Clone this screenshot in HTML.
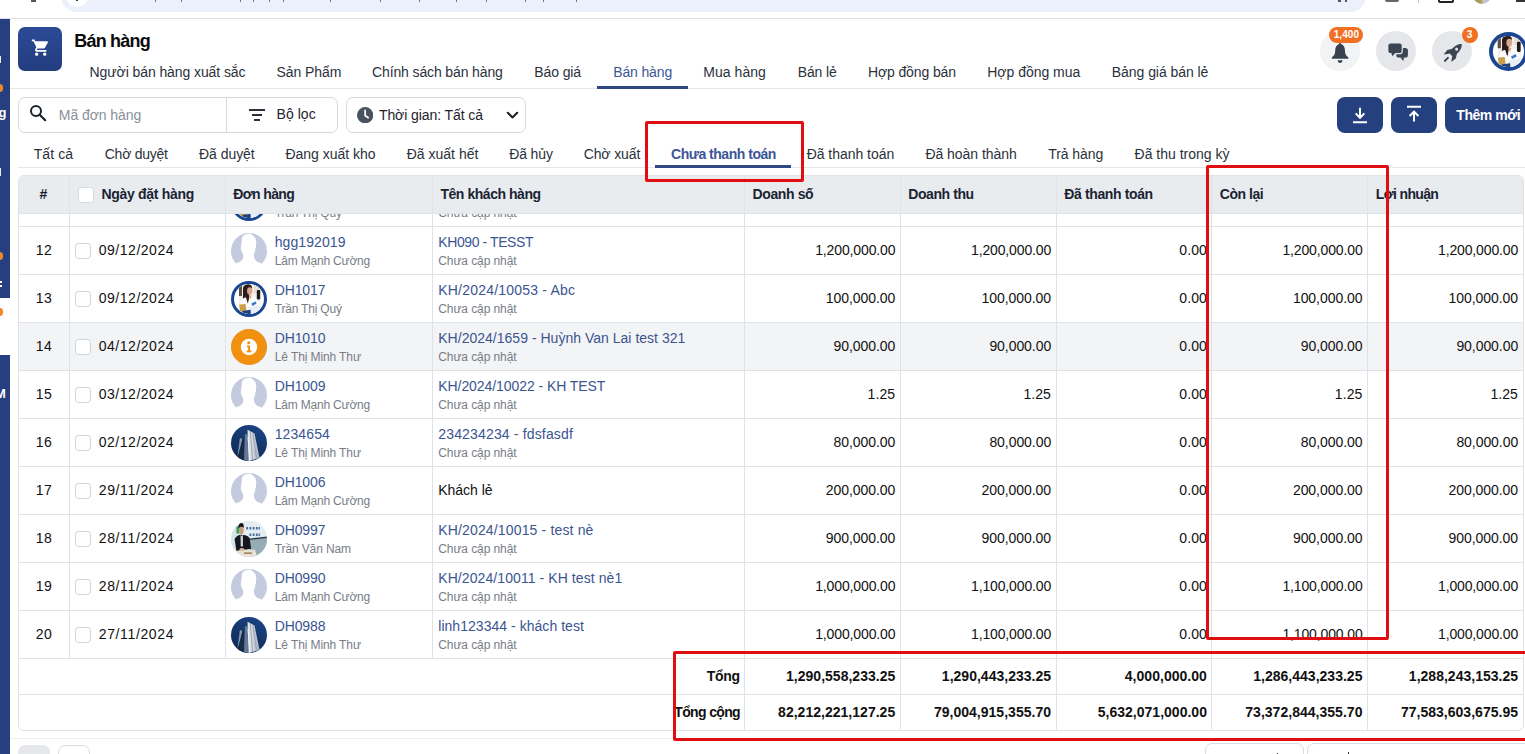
<!DOCTYPE html>
<html lang="vi"><head><meta charset="utf-8"><title>Bán hàng</title>
<style>
*{box-sizing:border-box;margin:0;padding:0}
html,body{width:1525px;height:754px;overflow:hidden;background:#fff}
body{position:relative;font-family:"Liberation Sans",sans-serif;font-size:14px;color:#111}
.a{position:absolute}
.t{position:absolute;white-space:nowrap;line-height:1}
.hl{position:absolute;height:1px;background:#dfe2e7}
.vl{position:absolute;width:1px;background:#dfe2e7}
.cb{position:absolute;width:16px;height:16px;border:1px solid #cfd3da;border-radius:3.5px;background:#fff}
.red{position:absolute;border:3px solid #e10d10;border-radius:2px}
.av{position:absolute;width:36px;height:36px}
.ic{position:absolute;width:40px;height:40px;border-radius:50%}
.btn{position:absolute;top:97px;height:36px;background:#25407f;border-radius:8px}
</style></head><body>

<svg width="0" height="0" style="position:absolute"><defs><mask id="mdef" maskUnits="userSpaceOnUse" x="0" y="0" width="36" height="36"><rect width="36" height="36" fill="#fff"/><path fill="#000" d="M16.500 .9C13 1.100 11.200 3 10.900 5.400L10.300 12.400L9.700 15.300L10.600 18.200L12.400 22.300C12.400 24 11.800 26.500 10.600 27.600C9 29 7 29.800 5.400 30.200L-1 32.800L-1 37L37 37L37 32.800L30.500 30.500C28.500 29.800 26.500 29.200 25.200 28.100C23.800 26.800 23 24.500 22.900 22.300L23.800 18.200L24.900 14.100L25.200 9.500C25.200 7.500 24.800 6 24.100 4.800C23.400 3.500 22.300 2.500 21 1.900L20.600 1.050C19.500 .85 18 .8 16.500 .9Z"/></mask></defs></svg>
<div class="a" style="left:61px;top:-20px;width:1305px;height:32px;background:#ecf0fa;border-radius:16px"></div>
<div class="a" style="left:66px;top:-15px;width:22px;height:22px;background:#fff;border-radius:50%"></div>
<div class="a" style="left:76px;top:0;width:2px;height:1px;background:#444"></div>
<div class="a" style="left:31px;top:0;width:5px;height:1.5px;background:#555"></div>
<div class="a" style="left:155px;top:0;width:1px;height:2px;background:#777"></div><div class="a" style="left:181px;top:0;width:1px;height:2px;background:#777"></div><div class="a" style="left:240px;top:0;width:1px;height:2px;background:#777"></div><div class="a" style="left:253px;top:0;width:1px;height:2px;background:#777"></div><div class="a" style="left:269px;top:0;width:1px;height:2px;background:#777"></div><div class="a" style="left:283px;top:0;width:1px;height:2px;background:#777"></div><div class="a" style="left:330px;top:0;width:1px;height:2px;background:#777"></div><div class="a" style="left:380px;top:0;width:1px;height:2px;background:#777"></div><div class="a" style="left:419px;top:0;width:1px;height:2px;background:#777"></div><div class="a" style="left:456px;top:0;width:1px;height:2px;background:#777"></div><div class="a" style="left:486px;top:0;width:1px;height:2px;background:#777"></div><div class="a" style="left:525px;top:0;width:1px;height:2px;background:#777"></div><div class="a" style="left:543px;top:0;width:1px;height:2px;background:#777"></div><div class="a" style="left:576px;top:0;width:1px;height:2px;background:#777"></div>
<div class="a" style="left:1338px;top:0;width:2.500px;height:1.500px;background:#555"></div><div class="a" style="left:1344.500px;top:0;width:2.500px;height:1.500px;background:#555"></div>
<div class="a" style="left:1385px;top:-8px;width:14px;height:10px;border:2px solid #666;border-radius:2px"></div>
<div class="a" style="left:1418px;top:0;width:1px;height:3px;background:#b9c7ef"></div>
<div class="a" style="left:1438px;top:-9px;width:16px;height:12px;border:2px solid #222;border-radius:2px"></div>
<div class="a" style="left:1473px;top:-14px;width:18px;height:18px;border-radius:50%;background:linear-gradient(90deg,#8d8f45 0,#a9a35b 45%,#c8ccd4 60%,#aeb6c6 100%)"></div>
<div class="a" style="left:1516px;top:0;width:9px;height:2px;background:#333"></div>
<div class="hl" style="left:0;top:18px;width:1525px;background:#dcdee2"></div>
<div class="a" style="left:0;top:19px;width:10px;height:279px;background:#253f80"></div>
<div class="a" style="left:0;top:355px;width:10px;height:399px;background:#253f80"></div>
<div class="a" style="left:0;top:19px;width:10px;height:735px;overflow:hidden">
<div class="a" style="left:-4.200px;top:65.2px;width:7.600px;height:7.600px;border-radius:50%;background:#f08a24"></div>
<div class="a" style="left:-4.200px;top:233.2px;width:7.600px;height:7.600px;border-radius:50%;background:#f08a24"></div>
<div class="a" style="left:-4.200px;top:289.2px;width:7.600px;height:7.600px;border-radius:50%;background:#f08a24"></div>
<div class="a" style="left:0;top:37px;width:1px;height:7px;background:#e8ebf3"></div>
<div class="a" style="left:0;top:149px;width:1px;height:8px;background:#e8ebf3"></div>
<div class="a" style="left:0;top:262px;width:2px;height:2px;background:#fff"></div>
<div class="a" style="left:0;top:266px;width:2px;height:2px;background:#fff"></div>
<span class="t" style="left:-1.5px;top:86.5px;font-size:13px;font-weight:700;color:#fff">g</span>
<span class="t" style="left:-5px;top:368.0px;font-size:13px;font-weight:700;color:#fff">M</span>
</div>
<div class="a" style="left:18px;top:27px;width:44px;height:44px;border-radius:7px;background:linear-gradient(180deg,#2b4b97,#233d7e)"></div>
<svg class="a" style="left:31px;top:38.2px" width="19.4" height="19.4" viewBox="0 0 24 24"><path fill="#fff" d="M7 18c-1.1 0-1.99.9-1.99 2S5.9 22 7 22s2-.9 2-2-.9-2-2-2zM1 2v2h2l3.6 7.59-1.35 2.45c-.16.28-.25.61-.25.96 0 1.1.9 2 2 2h12v-2H7.42c-.14 0-.25-.11-.25-.25l.03-.12.9-1.63h7.45c.75 0 1.41-.41 1.75-1.03l3.58-6.49c.08-.14.12-.31.12-.48 0-.55-.45-1-1-1H5.21l-.94-2H1zm16 16c-1.1 0-1.99.9-1.99 2s.89 2 1.99 2 2-.9 2-2-.9-2-2-2z"/></svg>
<span class="t" id="t1" style="top:31.76px;font-size:18px;font-weight:700;color:#0b0b0b;letter-spacing:-0.802px;left:74.25px;">Bán hàng</span>
<span class="t" id="t2" style="top:65.15px;font-size:14px;color:#2b313b;letter-spacing:-0.086px;left:89.55px;">Người bán hàng xuất sắc</span>
<span class="t" id="t3" style="top:65.15px;font-size:14px;color:#2b313b;letter-spacing:-0.072px;left:276.45px;">Sản Phẩm</span>
<span class="t" id="t4" style="top:65.15px;font-size:14px;color:#2b313b;letter-spacing:-0.127px;left:372.05px;">Chính sách bán hàng</span>
<span class="t" id="t5" style="top:65.15px;font-size:14px;color:#2b313b;letter-spacing:-0.112px;left:534.35px;">Báo giá</span>
<span class="t" id="t6" style="top:65.15px;font-size:14px;color:#3c5796;letter-spacing:-0.144px;left:613.25px;">Bán hàng</span>
<span class="t" id="t7" style="top:65.15px;font-size:14px;color:#2b313b;letter-spacing:0.027px;left:703.35px;">Mua hàng</span>
<span class="t" id="t8" style="top:65.15px;font-size:14px;color:#2b313b;letter-spacing:-0.134px;left:797.75px;">Bán lẻ</span>
<span class="t" id="t9" style="top:65.15px;font-size:14px;color:#2b313b;letter-spacing:-0.114px;left:867.95px;">Hợp đồng bán</span>
<span class="t" id="t10" style="top:65.15px;font-size:14px;color:#2b313b;letter-spacing:-0.020px;left:987.25px;">Hợp đồng mua</span>
<span class="t" id="t11" style="top:65.15px;font-size:14px;color:#2b313b;letter-spacing:-0.060px;left:1111.85px;">Bảng giá bán lẻ</span>
<div class="hl" style="left:10px;top:88px;width:1515px;background:#e4e6ea"></div>
<div class="a" style="left:597px;top:86px;width:91px;height:3px;background:#2e4785"></div>
<div class="ic" style="left:1320px;top:31px;background:#f2f3f5"></div>
<svg class="a" style="left:1320px;top:31px" width="40" height="40" viewBox="1320 31 40 40"><path fill="#384150" d="M1339.300 41.500h1.600v3h-1.600zM1335.200 51C1335.200 46.300 1337.500 44 1340.100 44C1342.700 44 1345 46.300 1345 51C1345 54.500 1346.500 56 1348.300 57.200L1348.300 58.700L1331.900 58.700L1331.900 57.200C1333.700 56 1335.200 54.500 1335.200 51ZM1337.700 60.300H1342.500C1342.500 62 1341.400 63.100 1340.100 63.100C1338.800 63.100 1337.700 62 1337.700 60.300Z"/></svg>
<div class="a" style="left:1329px;top:27px;width:34px;height:16px;border-radius:8px;background:#f06f22"></div>
<span class="t" id="t12" style="top:29.54px;font-size:10px;font-weight:700;color:#fff;letter-spacing:0.073px;left:1333.65px;">1,400</span>
<div class="ic" style="left:1376px;top:31px;background:#e5e7ea"></div>
<svg class="a" style="left:1376px;top:31px" width="40" height="40" viewBox="1376 31 40 40"><g fill="#3b4453">
<rect x="1396.300" y="48" width="11.600" height="9.500" rx="2.600"/><path d="M1400.300 57.200h3.900l-1 3.700z"/>
<rect x="1388.400" y="43.400" width="13.300" height="9.700" rx="2.200" stroke="#e5e7ea" stroke-width="2.400"/>
<path d="M1391.300 52.800h4.300l-3.300 3.400z"/><rect x="1388.400" y="43.400" width="13.300" height="9.700" rx="2.200"/></g></svg>
<div class="ic" style="left:1432px;top:31px;background:#e5e7ea"></div>
<svg class="a" style="left:1432px;top:31px" width="40" height="40" viewBox="1432 31 40 40"><g fill="#3b4453" transform="translate(1455.500 50.250) rotate(45)">
<path d="M0-8.900C2.700-6.600 3.700-3 3.500 1L3.200 6.500L-3.200 6.500L-3.500 1C-3.700-3-2.700-6.600 0-8.900Z"/><path d="M3.300 1.300L6 5.600L5.400 11.300L2.100 7zM-3.300 1.300L-6 5.600L-5.400 11.300L-2.100 7z"/>
<rect x="-.95" y="9.800" width="1.900" height="6" rx=".6"/><circle cx="0" cy="-1.600" r="1.500" fill="#e5e7ea"/></g></svg>
<div class="a" style="left:1462px;top:27px;width:16px;height:16px;border-radius:8px;background:#f06f22"></div>
<span class="t" id="t13" style="top:29.83px;font-size:10px;font-weight:700;color:#fff;left:1466.65px;">3</span>
<div class="a" style="left:18px;top:97px;width:320px;height:36px;border:1px solid #d6d9de;border-radius:7px"></div>
<div class="vl" style="left:226px;top:98px;height:34px;background:#d6d9de"></div>
<svg class="a" style="left:29px;top:104px" width="18" height="18" viewBox="0 0 18 18"><circle cx="7" cy="7" r="5" stroke="#1c222d" stroke-width="2" fill="none"/><path d="M10.700 10.700L16.200 16.200" stroke="#1c222d" stroke-width="2.200" stroke-linecap="round"/></svg>
<span class="t" id="t14" style="top:108.15px;font-size:14px;color:#8b919b;letter-spacing:-0.076px;left:58.85px;">Mã đơn hàng</span>
<div class="a" style="left:249px;top:109px;width:16px;height:2px;background:#2b313b"></div>
<div class="a" style="left:251.7px;top:114px;width:10.5px;height:2px;background:#2b313b"></div>
<div class="a" style="left:254.2px;top:119px;width:5.6px;height:2px;background:#2b313b"></div>
<span class="t" id="t15" style="top:107.15px;font-size:14px;color:#1d222b;letter-spacing:0.046px;left:276.55px;">Bộ lọc</span>
<div class="a" style="left:346px;top:97px;width:180px;height:36px;border:1px solid #d6d9de;border-radius:7px"></div>
<svg class="a" style="left:356.7px;top:107.2px" width="16.300" height="16.300" viewBox="0 0 16 16"><circle cx="8" cy="8" r="8" fill="#4a5260"/><path d="M8 3.200V8.300l3 2.200" stroke="#fff" stroke-width="1.700" fill="none" stroke-linecap="round"/></svg>
<span class="t" id="t16" style="top:108.15px;font-size:14px;color:#1d222b;letter-spacing:-0.084px;left:378.95px;">Thời gian: Tất cả</span>
<svg class="a" style="left:505.5px;top:110.500px" width="13" height="9" viewBox="0 0 13 9"><path d="M1.800 1.800L6.500 6.500 11.200 1.800" stroke="#222" stroke-width="2.100" fill="none" stroke-linecap="round" stroke-linejoin="round"/></svg>
<div class="btn" style="left:1337px;width:46px"></div>
<svg class="a" style="left:1352px;top:107px" width="16" height="17" viewBox="0 0 16 17"><path d="M8 .8v9.800M3.600 6.400L8 10.800l4.400-4.400M1 15.300h14" stroke="#fff" stroke-width="2" fill="none"/></svg>
<div class="btn" style="left:1391px;width:46px"></div>
<svg class="a" style="left:1406px;top:104.500px" width="16" height="17" viewBox="0 0 16 17"><path d="M8 16.500V6.700M3.600 11L8 6.600l4.400 4.400M1 1.700h14" stroke="#fff" stroke-width="2" fill="none"/></svg>
<div class="btn" style="left:1445px;width:90px"></div>
<span class="t" id="t17" style="top:108.15px;font-size:14px;font-weight:700;color:#fff;letter-spacing:-0.454px;left:1456.35px;">Thêm mới</span>
<span class="t" id="t18" style="top:147.15px;font-size:14px;color:#2b313b;letter-spacing:0.066px;left:33.75px;">Tất cả</span>
<span class="t" id="t19" style="top:147.15px;font-size:14px;color:#2b313b;letter-spacing:-0.247px;left:104.75px;">Chờ duyệt</span>
<span class="t" id="t20" style="top:147.15px;font-size:14px;color:#2b313b;letter-spacing:-0.031px;left:198.95px;">Đã duyệt</span>
<span class="t" id="t21" style="top:147.15px;font-size:14px;color:#2b313b;letter-spacing:-0.007px;left:285.45px;">Đang xuất kho</span>
<span class="t" id="t22" style="top:147.15px;font-size:14px;color:#2b313b;letter-spacing:0.017px;left:406.65px;">Đã xuất hết</span>
<span class="t" id="t23" style="top:147.15px;font-size:14px;color:#2b313b;letter-spacing:-0.143px;left:509.25px;">Đã hủy</span>
<span class="t" id="t24" style="top:147.15px;font-size:14px;color:#2b313b;letter-spacing:-0.105px;left:583.65px;">Chờ xuất</span>
<span class="t" id="t25" style="top:147.15px;font-size:14px;font-weight:700;color:#3b5596;letter-spacing:-0.482px;left:671.05px;">Chưa thanh toán</span>
<span class="t" id="t26" style="top:147.15px;font-size:14px;color:#2b313b;letter-spacing:-0.036px;left:806.65px;">Đã thanh toán</span>
<span class="t" id="t27" style="top:147.15px;font-size:14px;color:#2b313b;letter-spacing:-0.043px;left:925.45px;">Đã hoàn thành</span>
<span class="t" id="t28" style="top:147.15px;font-size:14px;color:#2b313b;letter-spacing:-0.066px;left:1048.25px;">Trả hàng</span>
<span class="t" id="t29" style="top:147.15px;font-size:14px;color:#2b313b;letter-spacing:-0.003px;left:1134.55px;">Đã thu trong kỳ</span>
<div class="hl" style="left:18px;top:167px;width:1507px;background:#e4e6ea"></div>
<div class="a" style="left:655px;top:165px;width:136px;height:3px;background:#2e4785"></div>
<div class="a" style="left:18px;top:175px;width:1506px;height:556px;border:1px solid #dfe2e7;border-radius:6px;overflow:hidden">
<div class="a" style="left:0;top:0;width:1504px;height:37px;background:#e9ecef"></div>
<div class="a" style="left:0;top:146px;width:1504px;height:48px;background:#f3f4f6"></div>
</div>
<div class="hl" style="left:19px;top:213px;width:1504px"></div>
<div class="hl" style="left:19px;top:226px;width:1504px"></div>
<div class="hl" style="left:19px;top:274px;width:1504px"></div>
<div class="hl" style="left:19px;top:322px;width:1504px"></div>
<div class="hl" style="left:19px;top:370px;width:1504px"></div>
<div class="hl" style="left:19px;top:418px;width:1504px"></div>
<div class="hl" style="left:19px;top:466px;width:1504px"></div>
<div class="hl" style="left:19px;top:514px;width:1504px"></div>
<div class="hl" style="left:19px;top:562px;width:1504px"></div>
<div class="hl" style="left:19px;top:610px;width:1504px"></div>
<div class="hl" style="left:19px;top:658px;width:1504px"></div>
<div class="hl" style="left:19px;top:694px;width:1504px"></div>
<div class="vl" style="left:69px;top:176px;height:482px"></div>
<div class="vl" style="left:225px;top:176px;height:482px"></div>
<div class="vl" style="left:432px;top:176px;height:482px"></div>
<div class="vl" style="left:744px;top:176px;height:554px"></div>
<div class="vl" style="left:900px;top:176px;height:554px"></div>
<div class="vl" style="left:1056px;top:176px;height:554px"></div>
<div class="vl" style="left:1211px;top:176px;height:554px"></div>
<div class="vl" style="left:1367px;top:176px;height:554px"></div>
<span class="t" id="t30" style="top:187.15px;font-size:14px;font-weight:700;color:#1b2333;left:39.55px;">#</span>
<div class="cb" style="left:78px;top:187px;border-color:#d5d8de"></div>
<span class="t" id="t31" style="top:187.15px;font-size:14px;font-weight:700;color:#1b2333;letter-spacing:-0.312px;left:101.55px;">Ngày đặt hàng</span>
<span class="t" id="t32" style="top:187.15px;font-size:14px;font-weight:700;color:#1b2333;letter-spacing:-0.632px;left:233.25px;">Đơn hàng</span>
<span class="t" id="t33" style="top:187.15px;font-size:14px;font-weight:700;color:#1b2333;letter-spacing:-0.456px;left:440.45px;">Tên khách hàng</span>
<span class="t" id="t34" style="top:187.15px;font-size:14px;font-weight:700;color:#1b2333;letter-spacing:-0.385px;left:752.55px;">Doanh số</span>
<span class="t" id="t35" style="top:187.15px;font-size:14px;font-weight:700;color:#1b2333;letter-spacing:-0.413px;left:908.25px;">Doanh thu</span>
<span class="t" id="t36" style="top:187.15px;font-size:14px;font-weight:700;color:#1b2333;letter-spacing:-0.372px;left:1064.25px;">Đã thanh toán</span>
<span class="t" id="t37" style="top:187.15px;font-size:14px;font-weight:700;color:#1b2333;letter-spacing:-0.453px;left:1219.75px;">Còn lại</span>
<span class="t" id="t38" style="top:187.15px;font-size:14px;font-weight:700;color:#1b2333;letter-spacing:-0.642px;left:1375.75px;">Lợi nhuận</span>
<svg class="av" style="left:1489px;top:31.5px;width:39px;height:39px;" viewBox="0 0 36 36"><defs><clipPath id="k1"><circle cx="18" cy="18" r="14.4"/></clipPath></defs><circle cx="18" cy="18" r="18" fill="#1b4692"/><g clip-path="url(#k1)"><rect width="36" height="36" fill="#fff"/><rect x="8" y="0" width="21.500" height="36" fill="#f3f0ec"/><rect x="8" y="5" width="3" height="10" fill="#5a5048"/><rect x="23" y="3" width="6.500" height="9" fill="#e9dfd2"/><path d="M12 9C11.500 4.500 15 3 17.500 3.200C20 3.400 21.200 5 21 7L18.300 13C18.300 17 17.500 20.500 17 22.700L12.300 22C11.500 18 12.300 13 12 9Z" fill="#2b1c17"/><ellipse cx="18.700" cy="10" rx="2.700" ry="3.700" fill="#d7a88d"/><path d="M9 23C10 18 13 16.500 15 16.500L17 23L19 15.500L22.500 15.500C26 16.500 28 20 29 24L29 36L9 36Z" fill="#fbfbfb"/><path d="M17.800 14.500L20.800 14.500L19.300 19Z" fill="#d7a88d"/><rect x="25.800" y="9" width="3.400" height="9.400" rx="1" fill="#1e1a19"/><path d="M8.300 23.500L14.500 23L15.500 30.500L9 31.500Z" fill="#c9a04a"/><path d="M20.300 22.600L24.600 20.400L25.600 22.600L21.300 25Z" fill="#3a78c9"/><path d="M17 26.500L29 24L31 34L18 36Z" fill="#e9eef6"/><path d="M11.500 30L19.500 28.800L20 36L11 36Z" fill="#1c3f80"/></g></svg>
<div class="a" style="left:19px;top:214px;width:1504px;height:12px;overflow:hidden">
<svg class="av" style="left:212px;top:-29px;width:36px;height:36px;" viewBox="0 0 36 36"><defs><clipPath id="k2"><circle cx="18" cy="18" r="15"/></clipPath></defs><circle cx="18" cy="18" r="18" fill="#1b4692"/><g clip-path="url(#k2)"><rect width="36" height="36" fill="#fff"/><rect x="8" y="0" width="21.500" height="36" fill="#f3f0ec"/><rect x="8" y="5" width="3" height="10" fill="#5a5048"/><rect x="23" y="3" width="6.500" height="9" fill="#e9dfd2"/><path d="M12 9C11.500 4.500 15 3 17.500 3.200C20 3.400 21.200 5 21 7L18.300 13C18.300 17 17.500 20.500 17 22.700L12.300 22C11.500 18 12.300 13 12 9Z" fill="#2b1c17"/><ellipse cx="18.700" cy="10" rx="2.700" ry="3.700" fill="#d7a88d"/><path d="M9 23C10 18 13 16.500 15 16.500L17 23L19 15.500L22.500 15.500C26 16.500 28 20 29 24L29 36L9 36Z" fill="#fbfbfb"/><path d="M17.800 14.500L20.800 14.500L19.300 19Z" fill="#d7a88d"/><rect x="25.800" y="9" width="3.400" height="9.400" rx="1" fill="#1e1a19"/><path d="M8.300 23.500L14.500 23L15.500 30.500L9 31.500Z" fill="#c9a04a"/><path d="M20.300 22.600L24.600 20.400L25.600 22.600L21.300 25Z" fill="#3a78c9"/><path d="M17 26.500L29 24L31 34L18 36Z" fill="#e9eef6"/><path d="M11.500 30L19.500 28.800L20 36L11 36Z" fill="#1c3f80"/></g></svg>
<span class="t" id="t39" style="top:-7.36px;font-size:12px;color:#787d86;letter-spacing:-0.197px;left:255.75px;">Trần Thị Quý</span>
<span class="t" id="t40" style="top:-7.36px;font-size:12px;color:#787d86;letter-spacing:-0.087px;left:419.25px;">Chưa cập nhật</span>
</div>
<span class="t" id="t41" style="top:243.15px;font-size:14px;color:#111;letter-spacing:0.409px;left:35.75px;">12</span>
<div class="cb" style="left:75px;top:243px"></div>
<span class="t" id="t42" style="top:243.15px;font-size:14px;color:#111;letter-spacing:0.522px;left:98.75px;">09/12/2024</span>
<svg class="av" style="left:231px;top:233px" viewBox="0 0 36 36"><circle cx="18" cy="18" r="18" fill="#c4cbdf" mask="url(#mdef)"/></svg>
<span class="t" id="t43" style="top:235.15px;font-size:14px;color:#3b5591;letter-spacing:0.102px;left:274.65px;">hgg192019</span>
<span class="t" id="t44" style="top:254.64px;font-size:12px;color:#787d86;letter-spacing:-0.190px;left:274.75px;">Lâm Mạnh Cường</span>
<span class="t" id="t45" style="top:235.15px;font-size:14px;color:#3b5591;letter-spacing:-0.401px;left:438.25px;">KH090 - TESST</span>
<span class="t" id="t46" style="top:254.64px;font-size:12px;color:#787d86;letter-spacing:-0.087px;left:438.25px;">Chưa cập nhật</span>
<span class="t" id="t47" style="top:243.15px;font-size:14px;color:#111;letter-spacing:-0.128px;right:629.62px;">1,200,000.00</span>
<span class="t" id="t48" style="top:243.15px;font-size:14px;color:#111;letter-spacing:-0.128px;right:473.82px;">1,200,000.00</span>
<span class="t" id="t49" style="top:243.15px;font-size:14px;color:#111;letter-spacing:0.075px;right:318.12px;">0.00</span>
<span class="t" id="t50" style="top:243.15px;font-size:14px;color:#111;letter-spacing:-0.128px;right:162.42px;">1,200,000.00</span>
<span class="t" id="t51" style="top:243.15px;font-size:14px;color:#111;letter-spacing:-0.128px;right:6.82px;">1,200,000.00</span>
<span class="t" id="t52" style="top:291.15px;font-size:14px;color:#111;letter-spacing:0.409px;left:35.75px;">13</span>
<div class="cb" style="left:75px;top:291px"></div>
<span class="t" id="t53" style="top:291.15px;font-size:14px;color:#111;letter-spacing:0.522px;left:98.75px;">09/12/2024</span>
<svg class="av" style="left:231px;top:281px;width:36px;height:36px;" viewBox="0 0 36 36"><defs><clipPath id="k3"><circle cx="18" cy="18" r="15"/></clipPath></defs><circle cx="18" cy="18" r="18" fill="#1b4692"/><g clip-path="url(#k3)"><rect width="36" height="36" fill="#fff"/><rect x="8" y="0" width="21.500" height="36" fill="#f3f0ec"/><rect x="8" y="5" width="3" height="10" fill="#5a5048"/><rect x="23" y="3" width="6.500" height="9" fill="#e9dfd2"/><path d="M12 9C11.500 4.500 15 3 17.500 3.200C20 3.400 21.200 5 21 7L18.300 13C18.300 17 17.500 20.500 17 22.700L12.300 22C11.500 18 12.300 13 12 9Z" fill="#2b1c17"/><ellipse cx="18.700" cy="10" rx="2.700" ry="3.700" fill="#d7a88d"/><path d="M9 23C10 18 13 16.500 15 16.500L17 23L19 15.500L22.500 15.500C26 16.500 28 20 29 24L29 36L9 36Z" fill="#fbfbfb"/><path d="M17.800 14.500L20.800 14.500L19.300 19Z" fill="#d7a88d"/><rect x="25.800" y="9" width="3.400" height="9.400" rx="1" fill="#1e1a19"/><path d="M8.300 23.500L14.500 23L15.500 30.500L9 31.500Z" fill="#c9a04a"/><path d="M20.300 22.600L24.600 20.400L25.600 22.600L21.300 25Z" fill="#3a78c9"/><path d="M17 26.500L29 24L31 34L18 36Z" fill="#e9eef6"/><path d="M11.500 30L19.500 28.800L20 36L11 36Z" fill="#1c3f80"/></g></svg>
<span class="t" id="t54" style="top:283.15px;font-size:14px;color:#3b5591;letter-spacing:-0.096px;left:274.65px;">DH1017</span>
<span class="t" id="t55" style="top:302.64px;font-size:12px;color:#787d86;letter-spacing:-0.197px;left:274.75px;">Trần Thị Quý</span>
<span class="t" id="t56" style="top:283.15px;font-size:14px;color:#3b5591;letter-spacing:0.200px;left:438.25px;">KH/2024/10053 - Abc</span>
<span class="t" id="t57" style="top:302.64px;font-size:12px;color:#787d86;letter-spacing:-0.087px;left:438.25px;">Chưa cập nhật</span>
<span class="t" id="t58" style="top:291.15px;font-size:14px;color:#111;letter-spacing:-0.047px;right:629.70px;">100,000.00</span>
<span class="t" id="t59" style="top:291.15px;font-size:14px;color:#111;letter-spacing:-0.047px;right:473.90px;">100,000.00</span>
<span class="t" id="t60" style="top:291.15px;font-size:14px;color:#111;letter-spacing:0.075px;right:318.12px;">0.00</span>
<span class="t" id="t61" style="top:291.15px;font-size:14px;color:#111;letter-spacing:-0.047px;right:162.50px;">100,000.00</span>
<span class="t" id="t62" style="top:291.15px;font-size:14px;color:#111;letter-spacing:-0.047px;right:6.90px;">100,000.00</span>
<span class="t" id="t63" style="top:339.15px;font-size:14px;color:#111;letter-spacing:0.409px;left:35.75px;">14</span>
<div class="cb" style="left:75px;top:339px"></div>
<span class="t" id="t64" style="top:339.15px;font-size:14px;color:#111;letter-spacing:0.522px;left:98.75px;">04/12/2024</span>
<svg class="av" style="left:231px;top:329px" viewBox="0 0 36 36"><circle cx="18" cy="18" r="17.700" fill="#f2900f" stroke="#d9810d" stroke-width=".6"/><circle cx="18" cy="18" r="8.200" fill="#fff"/><circle cx="17.800" cy="13.800" r="1.500" fill="#f2900f"/><path d="M16 16.600h3.100v4.900h1.300v1.700h-4.800v-1.700h1.500v-3.200h-1.100z" fill="#f2900f"/></svg>
<span class="t" id="t65" style="top:331.15px;font-size:14px;color:#3b5591;letter-spacing:-0.096px;left:274.65px;">DH1010</span>
<span class="t" id="t66" style="top:350.64px;font-size:12px;color:#787d86;letter-spacing:-0.103px;left:274.75px;">Lê Thị Minh Thư</span>
<span class="t" id="t67" style="top:331.15px;font-size:14px;color:#3b5591;letter-spacing:0.017px;left:438.25px;">KH/2024/1659 - Huỳnh Van Lai test 321</span>
<span class="t" id="t68" style="top:350.64px;font-size:12px;color:#787d86;letter-spacing:-0.087px;left:438.25px;">Chưa cập nhật</span>
<span class="t" id="t69" style="top:339.15px;font-size:14px;color:#111;letter-spacing:-0.061px;right:629.69px;">90,000.00</span>
<span class="t" id="t70" style="top:339.15px;font-size:14px;color:#111;letter-spacing:-0.061px;right:473.89px;">90,000.00</span>
<span class="t" id="t71" style="top:339.15px;font-size:14px;color:#111;letter-spacing:0.075px;right:318.12px;">0.00</span>
<span class="t" id="t72" style="top:339.15px;font-size:14px;color:#111;letter-spacing:-0.061px;right:162.49px;">90,000.00</span>
<span class="t" id="t73" style="top:339.15px;font-size:14px;color:#111;letter-spacing:-0.061px;right:6.89px;">90,000.00</span>
<span class="t" id="t74" style="top:387.15px;font-size:14px;color:#111;letter-spacing:0.409px;left:35.75px;">15</span>
<div class="cb" style="left:75px;top:387px"></div>
<span class="t" id="t75" style="top:387.15px;font-size:14px;color:#111;letter-spacing:0.522px;left:98.75px;">03/12/2024</span>
<svg class="av" style="left:231px;top:377px" viewBox="0 0 36 36"><circle cx="18" cy="18" r="18" fill="#c4cbdf" mask="url(#mdef)"/></svg>
<span class="t" id="t76" style="top:379.15px;font-size:14px;color:#3b5591;letter-spacing:-0.096px;left:274.65px;">DH1009</span>
<span class="t" id="t77" style="top:398.64px;font-size:12px;color:#787d86;letter-spacing:-0.190px;left:274.75px;">Lâm Mạnh Cường</span>
<span class="t" id="t78" style="top:379.15px;font-size:14px;color:#3b5591;letter-spacing:-0.066px;left:438.25px;">KH/2024/10022 - KH TEST</span>
<span class="t" id="t79" style="top:398.64px;font-size:12px;color:#787d86;letter-spacing:-0.087px;left:438.25px;">Chưa cập nhật</span>
<span class="t" id="t80" style="top:387.15px;font-size:14px;color:#111;letter-spacing:0.075px;right:629.83px;">1.25</span>
<span class="t" id="t81" style="top:387.15px;font-size:14px;color:#111;letter-spacing:0.075px;right:474.03px;">1.25</span>
<span class="t" id="t82" style="top:387.15px;font-size:14px;color:#111;letter-spacing:0.075px;right:318.12px;">0.00</span>
<span class="t" id="t83" style="top:387.15px;font-size:14px;color:#111;letter-spacing:0.075px;right:162.62px;">1.25</span>
<span class="t" id="t84" style="top:387.15px;font-size:14px;color:#111;letter-spacing:0.075px;right:7.03px;">1.25</span>
<span class="t" id="t85" style="top:435.15px;font-size:14px;color:#111;letter-spacing:0.409px;left:35.75px;">16</span>
<div class="cb" style="left:75px;top:435px"></div>
<span class="t" id="t86" style="top:435.15px;font-size:14px;color:#111;letter-spacing:0.522px;left:98.75px;">02/12/2024</span>
<svg class="av" style="left:231px;top:425px" viewBox="0 0 36 36"><defs><clipPath id="k4"><circle cx="18" cy="18" r="18"/></clipPath><linearGradient id="k4g" x1=".7" y1="0" x2=".2" y2="1"><stop offset="0" stop-color="#1a4484"/><stop offset="1" stop-color="#0e2750"/></linearGradient><linearGradient id="k4h" x1="0" y1="0" x2="1" y2="0"><stop offset="0" stop-color="#e6e9ec"/><stop offset=".45" stop-color="#cfd5dc"/><stop offset="1" stop-color="#9eabba"/></linearGradient></defs><g clip-path="url(#k4)"><rect width="36" height="36" fill="url(#k4g)"/><path d="M8.900 13.100L11.300 13.700L10.500 24L6.500 31Z" fill="#7e97bd"/><path d="M11.300 14.500L14 10L17.600 36L5 36L8 27Z" fill="#1a2a47"/><path d="M13.800 9L16.500 9.600L17.600 36L13 36Z" fill="#62779a"/><path d="M16.500 4.700L23.500 8.500L28.600 33L17.600 36Z" fill="url(#k4h)"/><path d="M19.300 6.500L21.500 35M21.800 8L25.500 34" stroke="#8f9cab" stroke-width=".8" fill="none"/><path d="M17 12L18.800 36" stroke="#f4f5f6" stroke-width=".9" fill="none"/></g></svg>
<span class="t" id="t87" style="top:427.15px;font-size:14px;color:#3b5591;letter-spacing:0.112px;left:274.65px;">1234654</span>
<span class="t" id="t88" style="top:446.64px;font-size:12px;color:#787d86;letter-spacing:-0.103px;left:274.75px;">Lê Thị Minh Thư</span>
<span class="t" id="t89" style="top:427.15px;font-size:14px;color:#3b5591;letter-spacing:0.162px;left:438.25px;">234234234 - fdsfasdf</span>
<span class="t" id="t90" style="top:446.64px;font-size:12px;color:#787d86;letter-spacing:-0.087px;left:438.25px;">Chưa cập nhật</span>
<span class="t" id="t91" style="top:435.15px;font-size:14px;color:#111;letter-spacing:-0.061px;right:629.69px;">80,000.00</span>
<span class="t" id="t92" style="top:435.15px;font-size:14px;color:#111;letter-spacing:-0.061px;right:473.89px;">80,000.00</span>
<span class="t" id="t93" style="top:435.15px;font-size:14px;color:#111;letter-spacing:0.075px;right:318.12px;">0.00</span>
<span class="t" id="t94" style="top:435.15px;font-size:14px;color:#111;letter-spacing:-0.061px;right:162.49px;">80,000.00</span>
<span class="t" id="t95" style="top:435.15px;font-size:14px;color:#111;letter-spacing:-0.061px;right:6.89px;">80,000.00</span>
<span class="t" id="t96" style="top:483.15px;font-size:14px;color:#111;letter-spacing:0.409px;left:35.75px;">17</span>
<div class="cb" style="left:75px;top:483px"></div>
<span class="t" id="t97" style="top:483.15px;font-size:14px;color:#111;letter-spacing:0.626px;left:98.75px;">29/11/2024</span>
<svg class="av" style="left:231px;top:473px" viewBox="0 0 36 36"><circle cx="18" cy="18" r="18" fill="#c4cbdf" mask="url(#mdef)"/></svg>
<span class="t" id="t98" style="top:475.15px;font-size:14px;color:#3b5591;letter-spacing:-0.096px;left:274.65px;">DH1006</span>
<span class="t" id="t99" style="top:494.64px;font-size:12px;color:#787d86;letter-spacing:-0.190px;left:274.75px;">Lâm Mạnh Cường</span>
<span class="t" id="t100" style="top:483.15px;font-size:14px;color:#111;letter-spacing:-0.025px;left:438.25px;">Khách lẻ</span>
<span class="t" id="t101" style="top:483.15px;font-size:14px;color:#111;letter-spacing:-0.047px;right:629.70px;">200,000.00</span>
<span class="t" id="t102" style="top:483.15px;font-size:14px;color:#111;letter-spacing:-0.047px;right:473.90px;">200,000.00</span>
<span class="t" id="t103" style="top:483.15px;font-size:14px;color:#111;letter-spacing:0.075px;right:318.12px;">0.00</span>
<span class="t" id="t104" style="top:483.15px;font-size:14px;color:#111;letter-spacing:-0.047px;right:162.50px;">200,000.00</span>
<span class="t" id="t105" style="top:483.15px;font-size:14px;color:#111;letter-spacing:-0.047px;right:6.90px;">200,000.00</span>
<span class="t" id="t106" style="top:531.15px;font-size:14px;color:#111;letter-spacing:0.409px;left:35.75px;">18</span>
<div class="cb" style="left:75px;top:531px"></div>
<span class="t" id="t107" style="top:531.15px;font-size:14px;color:#111;letter-spacing:0.626px;left:98.75px;">28/11/2024</span>
<svg class="av" style="left:231px;top:521px" viewBox="0 0 36 36"><defs><clipPath id="k5"><circle cx="18" cy="18" r="18"/></clipPath></defs><g clip-path="url(#k5)"><rect width="36" height="36" fill="#d3e5e8"/><rect x="13.500" y="0" width="22.500" height="17" fill="#e4eef2"/><path d="M15.300 6.100h1.800v2.400h-1.800zM18.500 6.100h1.800v2.400h-1.800zM21.700 6.100h1.800v2.400h-1.800zM24.900 6.100h1.800v2.400h-1.800zM27.600 6.100h1.300v2.400h-1.300zM18.500 12.500h1.800v2.400h-1.800zM21.700 12.500h1.800v2.400h-1.800zM24.900 12.500h1.800v2.400h-1.800zM27.600 12.500h1.300v2.400h-1.300z" fill="#456a9a"/><path d="M5.400 5.500h2.900v7h-2.900z" fill="#3aa35a"/><path d="M19 18.400L36 16.600L36 36L19 36Z" fill="#97abb4"/><path d="M19 17.400L36 15.500L36 17L19 18.800Z" fill="#2c3a44"/><path d="M3.600 18C4.500 15.500 7 14.200 9.500 13.700L14.100 14.300C16.500 15 18.200 16 18.800 17.500L20 27.700L5.400 30Z" fill="#14171d"/><ellipse cx="10.200" cy="9.400" rx="2.400" ry="3.700" fill="#c99a7c"/><path d="M7.400 7.500C7 4 8.500 2 10.200 2S13.200 3.500 12.700 7C11.500 5.500 9 5.300 7.400 7.500Z" fill="#15120f"/><path d="M9.500 13.800L10.700 15.200L11.900 13.800L12 25.400L9.700 25.400Z" fill="#cfd4db"/><path d="M3.600 30L24 28.500L26 36L2 36Z" fill="#e9e3d7"/><ellipse cx="11" cy="28.600" rx="2.700" ry="1.700" fill="#d9b59e"/><path d="M13 31.500h8v1.300h-8z" fill="#8a6a3a"/></g></svg>
<span class="t" id="t108" style="top:523.15px;font-size:14px;color:#3b5591;letter-spacing:-0.096px;left:274.65px;">DH0997</span>
<span class="t" id="t109" style="top:542.64px;font-size:12px;color:#787d86;letter-spacing:-0.116px;left:274.75px;">Trần Văn Nam</span>
<span class="t" id="t110" style="top:523.15px;font-size:14px;color:#3b5591;letter-spacing:0.153px;left:438.25px;">KH/2024/10015 - test nè</span>
<span class="t" id="t111" style="top:542.64px;font-size:12px;color:#787d86;letter-spacing:-0.087px;left:438.25px;">Chưa cập nhật</span>
<span class="t" id="t112" style="top:531.15px;font-size:14px;color:#111;letter-spacing:-0.047px;right:629.70px;">900,000.00</span>
<span class="t" id="t113" style="top:531.15px;font-size:14px;color:#111;letter-spacing:-0.047px;right:473.90px;">900,000.00</span>
<span class="t" id="t114" style="top:531.15px;font-size:14px;color:#111;letter-spacing:0.075px;right:318.12px;">0.00</span>
<span class="t" id="t115" style="top:531.15px;font-size:14px;color:#111;letter-spacing:-0.047px;right:162.50px;">900,000.00</span>
<span class="t" id="t116" style="top:531.15px;font-size:14px;color:#111;letter-spacing:-0.047px;right:6.90px;">900,000.00</span>
<span class="t" id="t117" style="top:579.15px;font-size:14px;color:#111;letter-spacing:0.409px;left:35.75px;">19</span>
<div class="cb" style="left:75px;top:579px"></div>
<span class="t" id="t118" style="top:579.15px;font-size:14px;color:#111;letter-spacing:0.626px;left:98.75px;">28/11/2024</span>
<svg class="av" style="left:231px;top:569px" viewBox="0 0 36 36"><circle cx="18" cy="18" r="18" fill="#c4cbdf" mask="url(#mdef)"/></svg>
<span class="t" id="t119" style="top:571.15px;font-size:14px;color:#3b5591;letter-spacing:-0.096px;left:274.65px;">DH0990</span>
<span class="t" id="t120" style="top:590.64px;font-size:12px;color:#787d86;letter-spacing:-0.190px;left:274.75px;">Lâm Mạnh Cường</span>
<span class="t" id="t121" style="top:571.15px;font-size:14px;color:#3b5591;letter-spacing:0.083px;left:438.25px;">KH/2024/10011 - KH test nè1</span>
<span class="t" id="t122" style="top:590.64px;font-size:12px;color:#787d86;letter-spacing:-0.087px;left:438.25px;">Chưa cập nhật</span>
<span class="t" id="t123" style="top:579.15px;font-size:14px;color:#111;letter-spacing:-0.128px;right:629.62px;">1,000,000.00</span>
<span class="t" id="t124" style="top:579.15px;font-size:14px;color:#111;letter-spacing:-0.128px;right:473.82px;">1,100,000.00</span>
<span class="t" id="t125" style="top:579.15px;font-size:14px;color:#111;letter-spacing:0.075px;right:318.12px;">0.00</span>
<span class="t" id="t126" style="top:579.15px;font-size:14px;color:#111;letter-spacing:-0.128px;right:162.42px;">1,100,000.00</span>
<span class="t" id="t127" style="top:579.15px;font-size:14px;color:#111;letter-spacing:-0.128px;right:6.82px;">1,000,000.00</span>
<span class="t" id="t128" style="top:627.15px;font-size:14px;color:#111;letter-spacing:0.409px;left:35.75px;">20</span>
<div class="cb" style="left:75px;top:627px"></div>
<span class="t" id="t129" style="top:627.15px;font-size:14px;color:#111;letter-spacing:0.626px;left:98.75px;">27/11/2024</span>
<svg class="av" style="left:231px;top:617px" viewBox="0 0 36 36"><defs><clipPath id="k6"><circle cx="18" cy="18" r="18"/></clipPath><linearGradient id="k6g" x1=".7" y1="0" x2=".2" y2="1"><stop offset="0" stop-color="#1a4484"/><stop offset="1" stop-color="#0e2750"/></linearGradient><linearGradient id="k6h" x1="0" y1="0" x2="1" y2="0"><stop offset="0" stop-color="#e6e9ec"/><stop offset=".45" stop-color="#cfd5dc"/><stop offset="1" stop-color="#9eabba"/></linearGradient></defs><g clip-path="url(#k6)"><rect width="36" height="36" fill="url(#k6g)"/><path d="M8.900 13.100L11.300 13.700L10.500 24L6.500 31Z" fill="#7e97bd"/><path d="M11.300 14.500L14 10L17.600 36L5 36L8 27Z" fill="#1a2a47"/><path d="M13.800 9L16.500 9.600L17.600 36L13 36Z" fill="#62779a"/><path d="M16.500 4.700L23.500 8.500L28.600 33L17.600 36Z" fill="url(#k6h)"/><path d="M19.300 6.500L21.500 35M21.800 8L25.500 34" stroke="#8f9cab" stroke-width=".8" fill="none"/><path d="M17 12L18.800 36" stroke="#f4f5f6" stroke-width=".9" fill="none"/></g></svg>
<span class="t" id="t130" style="top:619.15px;font-size:14px;color:#3b5591;letter-spacing:-0.096px;left:274.65px;">DH0988</span>
<span class="t" id="t131" style="top:638.64px;font-size:12px;color:#787d86;letter-spacing:-0.103px;left:274.75px;">Lê Thị Minh Thư</span>
<span class="t" id="t132" style="top:619.15px;font-size:14px;color:#3b5591;letter-spacing:0.036px;left:438.25px;">linh123344 - khách test</span>
<span class="t" id="t133" style="top:638.64px;font-size:12px;color:#787d86;letter-spacing:-0.087px;left:438.25px;">Chưa cập nhật</span>
<span class="t" id="t134" style="top:627.15px;font-size:14px;color:#111;letter-spacing:-0.128px;right:629.62px;">1,000,000.00</span>
<span class="t" id="t135" style="top:627.15px;font-size:14px;color:#111;letter-spacing:-0.128px;right:473.82px;">1,100,000.00</span>
<span class="t" id="t136" style="top:627.15px;font-size:14px;color:#111;letter-spacing:0.075px;right:318.12px;">0.00</span>
<span class="t" id="t137" style="top:627.15px;font-size:14px;color:#111;letter-spacing:-0.128px;right:162.42px;">1,100,000.00</span>
<span class="t" id="t138" style="top:627.15px;font-size:14px;color:#111;letter-spacing:-0.128px;right:6.82px;">1,000,000.00</span>
<span class="t" id="t139" style="top:668.95px;font-size:14px;font-weight:700;color:#111;letter-spacing:-0.330px;right:785.32px;">Tổng</span>
<span class="t" id="t140" style="top:705.35px;font-size:14px;font-weight:700;color:#111;letter-spacing:-0.650px;right:785.00px;">Tổng cộng</span>
<span class="t" id="t141" style="top:668.65px;font-size:14px;font-weight:700;color:#111;letter-spacing:0.013px;right:629.76px;">1,290,558,233.25</span>
<span class="t" id="t142" style="top:668.65px;font-size:14px;font-weight:700;color:#111;letter-spacing:0.013px;right:473.96px;">1,290,443,233.25</span>
<span class="t" id="t143" style="top:668.65px;font-size:14px;font-weight:700;color:#111;letter-spacing:0.033px;right:318.08px;">4,000,000.00</span>
<span class="t" id="t144" style="top:668.65px;font-size:14px;font-weight:700;color:#111;letter-spacing:0.013px;right:162.56px;">1,286,443,233.25</span>
<span class="t" id="t145" style="top:668.65px;font-size:14px;font-weight:700;color:#111;letter-spacing:0.013px;right:6.96px;">1,288,243,153.25</span>
<span class="t" id="t146" style="top:705.35px;font-size:14px;font-weight:700;color:#111;letter-spacing:0.022px;right:629.77px;">82,212,221,127.25</span>
<span class="t" id="t147" style="top:705.35px;font-size:14px;font-weight:700;color:#111;letter-spacing:0.022px;right:473.97px;">79,004,915,355.70</span>
<span class="t" id="t148" style="top:705.35px;font-size:14px;font-weight:700;color:#111;letter-spacing:0.013px;right:318.06px;">5,632,071,000.00</span>
<span class="t" id="t149" style="top:705.35px;font-size:14px;font-weight:700;color:#111;letter-spacing:0.022px;right:162.57px;">73,372,844,355.70</span>
<span class="t" id="t150" style="top:705.35px;font-size:14px;font-weight:700;color:#111;letter-spacing:0.022px;right:6.97px;">77,583,603,675.95</span>
<div class="hl" style="left:10px;top:738px;width:1515px;background:#eceef1"></div>
<div class="a" style="left:18px;top:745px;width:32px;height:32px;border-radius:7px;background:#e5e7eb"></div>
<div class="a" style="left:58px;top:745px;width:32px;height:32px;border-radius:7px;border:1px solid #d9dce1"></div>
<div class="a" style="left:1205px;top:743px;width:99px;height:32px;border-radius:7px;border:1px solid #d9dce1"></div>
<div class="a" style="left:1307px;top:743px;width:230px;height:32px;border-radius:7px;border:1px solid #d9dce1"></div>
<div class="a" style="left:1276.500px;top:752.500px;width:1.500px;height:1.500px;background:#333"></div>
<div class="a" style="left:1347.500px;top:752px;width:1.500px;height:2px;background:#333"></div>
<div class="red" style="left:645px;top:121px;width:159px;height:61px"></div>
<div class="red" style="left:1206px;top:165px;width:183px;height:475px"></div>
<div class="red" style="left:673px;top:651px;width:900px;height:90px"></div>
</body></html>
